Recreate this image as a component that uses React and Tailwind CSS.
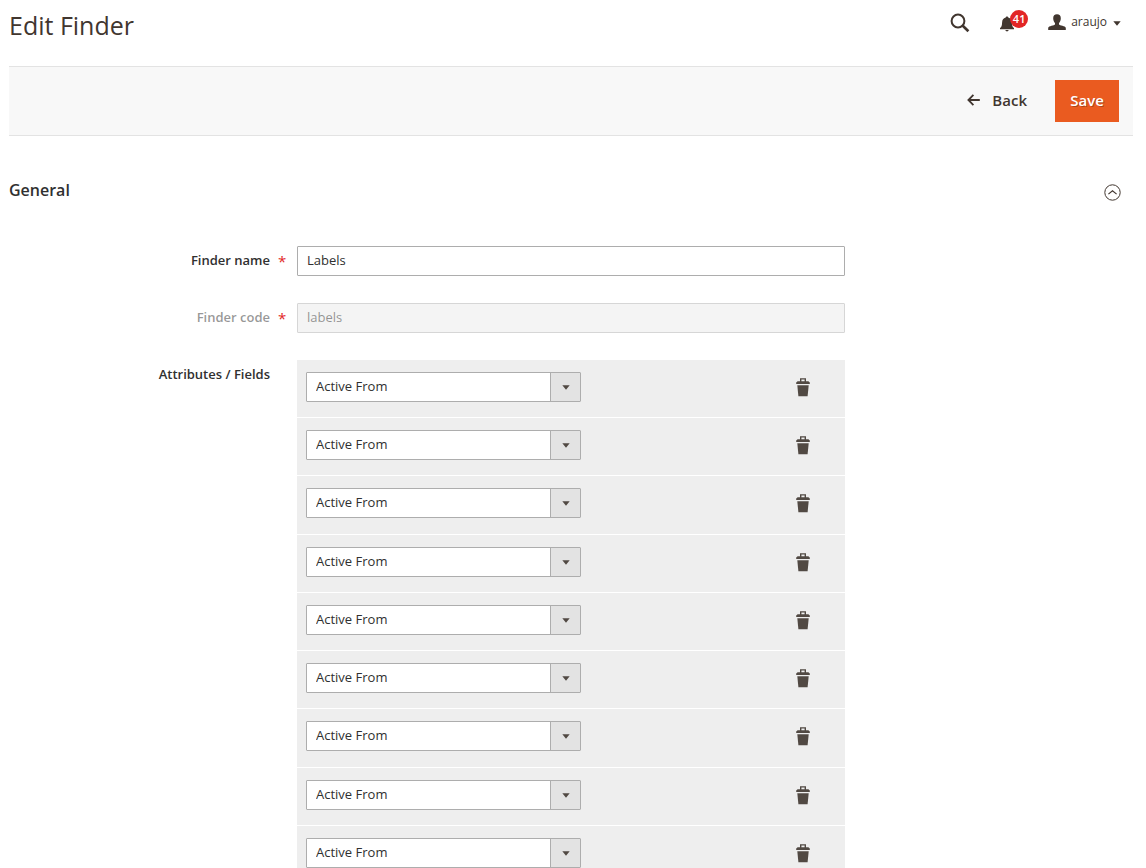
import React, { useState } from 'react';

const ATTRIBUTES = ['Active From', 'Active To', 'Color', 'Manufacturer', 'Price'];

function SearchIcon() {
  return (
    <svg viewBox="0 0 20 20" className="w-5 h-5" fill="none" stroke="currentColor">
      <circle cx="8" cy="8" r="6.4" strokeWidth="2" />
      <path d="M12.5 12.5L18.4 18.2" strokeWidth="2.6" />
    </svg>
  );
}

function BellIcon() {
  return (
    <svg viewBox="0 0 14 16" className="w-3.5 h-4" fill="currentColor">
      <path d="M7 0.4C7.7 0.4 8.2 0.9 8.3 1.6C10.7 2.2 11.8 4 11.9 6.4C12 9.4 12.4 10.8 14 12V13.2H0V12C1.6 10.8 2 9.4 2.1 6.4C2.2 4 3.3 2.2 5.7 1.6C5.8 0.9 6.3 0.4 7 0.4Z" />
      <path d="M5.4 14H8.6C8.4 15 7.8 15.4 7 15.4S5.6 15 5.4 14Z" />
    </svg>
  );
}

function UserIcon() {
  return (
    <svg viewBox="0 0 18 16" className="w-[18px] h-4" fill="currentColor">
      <path d="M9 0.2C11.5 0.2 12.8 1.7 12.8 4.2C12.8 6.4 12 8 11 8.9V10.4C11.5 11.4 17.5 11.7 17.8 13.8V16H0.2V13.8C0.5 11.7 6.5 11.4 7 10.4V8.9C6 8 5.2 6.4 5.2 4.2C5.2 1.7 6.5 0.2 9 0.2Z" />
    </svg>
  );
}

function BackIcon() {
  return (
    <svg viewBox="0 0 13 12" className="w-[13px] h-3" fill="none" stroke="currentColor" strokeWidth="1.8">
      <path d="M1.4 6H12.8M6.4 0.9L1.4 6L6.4 11.1" />
    </svg>
  );
}

function CollapseIcon() {
  return (
    <svg viewBox="0 0 18 18" className="w-[18px] h-[18px]" fill="none" stroke="currentColor">
      <circle cx="9.5" cy="8.5" r="7.7" strokeWidth="1" />
      <path d="M5.4 10.1L9.5 6.7L13.6 10.1" strokeWidth="1.2" />
    </svg>
  );
}

function TrashIcon() {
  return (
    <svg viewBox="0 0 14 19" className="w-3.5 h-[19px]" fill="currentColor">
      <path d="M4 3.2V0.3H10V3.2H12.4L13.8 4.4V6H0.2V4.4L1.6 3.2ZM5.4 1.6V3.2H8.6V1.6Z" fillRule="evenodd" />
      <path d="M1.3 7.2H12.7L11.6 18.2H2.4Z" />
    </svg>
  );
}

function CaretIcon() {
  return (
    <svg viewBox="0 0 8 5" className="w-2 h-[5px]" fill="currentColor">
      <path d="M0.3 0.2H7.7L4 4.8Z" />
    </svg>
  );
}

function Required() {
  return <span className="w-2 text-[15px] font-normal text-[#e22626]">*</span>;
}

function AttributeRow({ index, value, onChange, onDelete }) {
  return (
    <li className="flex items-start justify-between h-[58px] nth-[4n+3]:h-[59px] pt-3 pl-[9px] pr-[35px] bg-[#eeeeee] border-b border-white">
      <div className="relative w-[275px]">
        <select
          aria-label={`Attribute ${index + 1}`}
          value={value}
          onChange={(e) => onChange(e.target.value)}
          className="block w-full h-[30px] pl-[9px] pr-10 appearance-none bg-white border border-[#adadad] rounded-[1px] text-[13px]"
        >
          {ATTRIBUTES.map((name) => (
            <option key={name}>{name}</option>
          ))}
        </select>
        <span className="absolute inset-y-px right-px w-[30px] flex items-center justify-center bg-[#e3e3e3] border-l border-[#adadad] text-[#514943] pointer-events-none">
          <CaretIcon />
        </span>
      </div>
      <button type="button" aria-label="Delete" onClick={onDelete} className="mt-1.5 text-[#514943]">
        <TrashIcon />
      </button>
    </li>
  );
}

function App() {
  const [name, setName] = useState('Labels');
  const [open, setOpen] = useState(true);
  const [fields, setFields] = useState(() =>
    Array.from({ length: 9 }, (_, id) => ({ id, value: 'Active From' }))
  );

  const updateField = (id, value) => {
    setFields((prev) => prev.map((f) => (f.id === id ? { ...f, value } : f)));
  };

  const removeField = (id) => {
    setFields((prev) => prev.filter((f) => f.id !== id));
  };

  return (
    <div className="min-h-screen pl-[9px] pr-[13px] bg-white font-['Open_Sans',sans-serif] text-[13px] text-[#41362f]">
      {/* Header */}
      <header className="flex items-start justify-between h-[66px] pt-2 pr-3">
        <h1 className="text-[25px] leading-[34px]">Edit Finder</h1>
        <div className="flex items-center h-7">
          <button type="button" aria-label="Search" className="pt-0.5">
            <SearchIcon />
          </button>
          <button type="button" aria-label="Notifications" className="relative ml-[30px] pt-1">
            <BellIcon />
            <span className="absolute -top-0.5 left-2.5 w-[18px] h-[18px] rounded-full bg-[#e22626] text-[11px] leading-[18px] font-semibold text-white text-center">
              41
            </span>
          </button>
          <button type="button" className="flex items-center ml-[34px] text-[12px]">
            <UserIcon />
            <span className="ml-[5px]">araujo</span>
            <span className="ml-1.5 pt-0.5">
              <CaretIcon />
            </span>
          </button>
        </div>
      </header>

      {/* Page actions */}
      <div className="flex items-center justify-end h-[70px] pr-3.5 bg-[#f8f8f8] border-y border-[#e3e3e3] text-[15px] font-semibold">
        <button type="button" className="flex items-center gap-3 h-[42px] px-7 pb-0.5">
          <BackIcon />
          Back
        </button>
        <button
          type="button"
          className="w-16 h-[42px] pb-0.5 bg-[#ea5b20] text-white [text-shadow:1px_1px_0_rgba(0,0,0,0.25)]"
        >
          Save
        </button>
      </div>

      {/* General */}
      <section>
        <div className="flex items-end justify-between pt-[42px] pr-3">
          <h2 className="text-[16px] leading-6 font-semibold text-[#303030]">General</h2>
          <button type="button" aria-label="Toggle section" aria-expanded={open} onClick={() => setOpen(!open)}>
            <CollapseIcon />
          </button>
        </div>

        {open && (
          <div className="grid grid-cols-[277px_minmax(0,548px)] gap-x-[11px] gap-y-[27px] pt-11 text-[#303030]">
            <label htmlFor="finder-name" className="flex items-center justify-end gap-2 h-[30px] font-semibold">
              Finder name
              <Required />
            </label>
            <input
              id="finder-name"
              type="text"
              value={name}
              onChange={(e) => setName(e.target.value)}
              className="w-full h-[30px] px-[9px] pb-0.5 bg-white border border-[#adadad] rounded-[1px]"
            />

            <label
              htmlFor="finder-code"
              className="flex items-center justify-end gap-2 h-[30px] font-semibold text-[#303030]/50"
            >
              Finder code
              <Required />
            </label>
            <input
              id="finder-code"
              type="text"
              value="labels"
              disabled
              className="w-full h-[30px] px-[9px] pb-0.5 bg-[#f4f4f4] border border-[#d6d6d6] rounded-[1px] text-[#303030]/50"
            />

            <span id="fields-label" className="h-[30px] pr-4 leading-7 text-right font-semibold">
              Attributes / Fields
            </span>
            <ul aria-labelledby="fields-label">
              {fields.map((field, index) => (
                <AttributeRow
                  key={field.id}
                  index={index}
                  value={field.value}
                  onChange={(value) => updateField(field.id, value)}
                  onDelete={() => removeField(field.id)}
                />
              ))}
            </ul>
          </div>
        )}
      </section>
    </div>
  );
}

export default App;
